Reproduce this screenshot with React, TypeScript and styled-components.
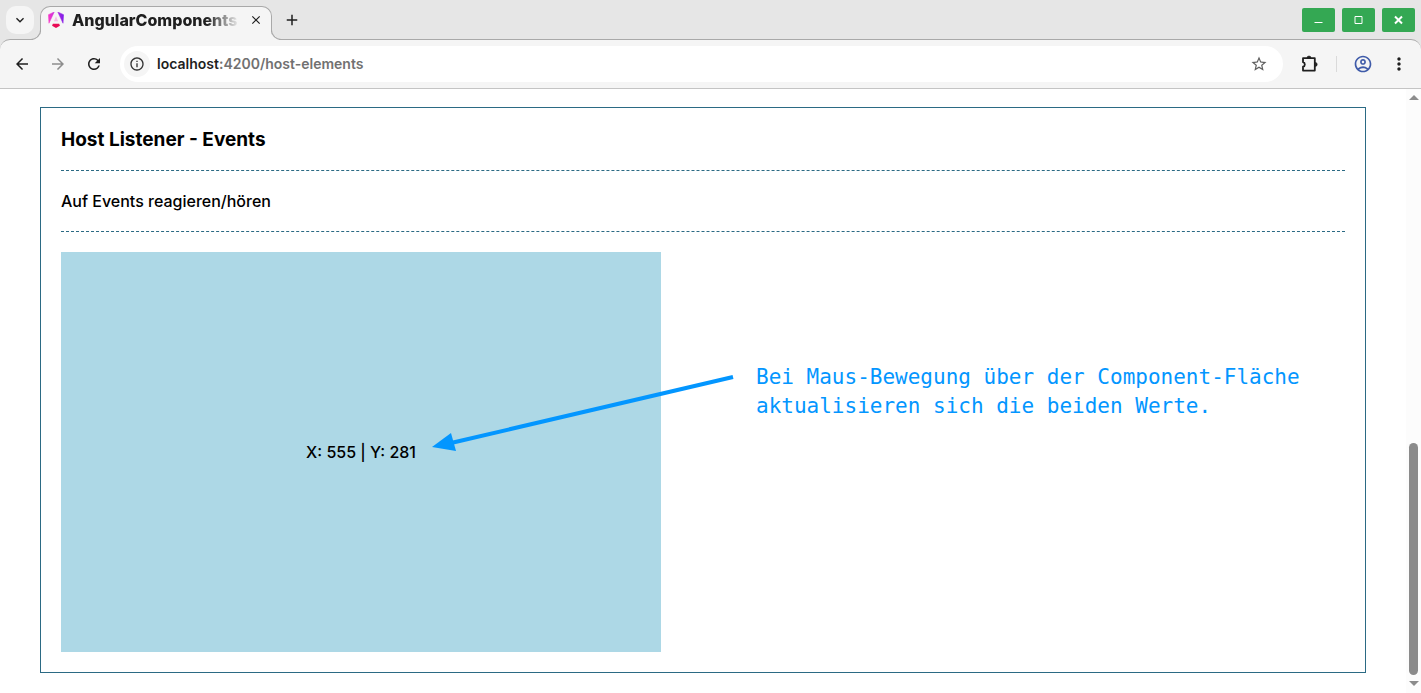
import React, { useState } from "react";
import styled, { createGlobalStyle } from "styled-components";
import {
  MdAdd,
  MdArrowBack,
  MdArrowForward,
  MdClose,
  MdInfoOutline,
  MdKeyboardArrowDown,
  MdMoreVert,
  MdOutlineAccountCircle,
  MdRefresh,
  MdStarBorder,
} from "react-icons/md";

const chrome = "#f5f5f5";
const outline = "#a9a9a9";
const blue = "#0396ff";

const GlobalStyle = createGlobalStyle`
  * { box-sizing: border-box; }
  body { margin: 0; background: #fff; color: #000; font-family: Inter, "Liberation Sans", sans-serif; }
  button { font: inherit; color: inherit; border: 0; padding: 0; background: none; }
`;

const Window = styled.div`
  display: flex;
  flex-direction: column;
  min-height: 100vh;
`;

const TabStrip = styled.header`
  display: flex;
  height: 40px;
  background: #e6e6e6;
  padding: 0 6px;
`;

const TabSearch = styled.button`
  display: grid;
  place-items: center;
  width: 28px;
  height: 28px;
  margin: 6px 6px 0 0;
  border-radius: 10px;
  background: ${chrome};
  color: #1f1f1f;
`;

const Tab = styled.div`
  position: relative;
  z-index: 1;
  display: flex;
  align-items: center;
  width: 232px;
  height: 34px;
  margin-top: 6px;
  padding: 0 6px 7px 7px;
  border: 1px solid ${outline};
  border-bottom: 0;
  border-radius: 10px 10px 0 0;
  background: ${chrome};

  &::before,
  &::after {
    content: "";
    position: absolute;
    bottom: 0;
    width: 10px;
    height: 10px;
    border: solid ${outline};
  }
  &::before {
    right: 100%;
    border-width: 0 1px 1px 0;
    border-radius: 0 0 10px 0;
    box-shadow: 3px 3px 0 ${chrome};
    clip-path: inset(0 -1px 0 0);
  }
  &::after {
    left: 100%;
    border-width: 0 0 1px 1px;
    border-radius: 0 0 0 10px;
    box-shadow: -3px 3px 0 ${chrome};
    clip-path: inset(0 0 0 -1px);
  }
`;

const TabTitle = styled.span`
  flex: 1;
  margin: 0 7px 0 8px;
  overflow: hidden;
  white-space: nowrap;
  font-size: 16px;
  line-height: 20px;
  font-weight: 800;
  color: #1f1f1f;
  mask-image: linear-gradient(to right, #000 80%, transparent);
`;

const StripButton = styled.button`
  display: grid;
  place-items: center;
  width: 18px;
  height: 18px;
  color: #1f1f1f;
`;

const NewTab = styled(StripButton)`
  margin: 11px 0 0 11px;
`;

const WindowControls = styled.div`
  display: flex;
  gap: 7px;
  margin: 8px 0 0 auto;
`;

const WindowButton = styled.button`
  display: grid;
  place-items: center;
  width: 33px;
  height: 24px;
  border-radius: 2px;
  background: #34a853;
`;

const Toolbar = styled.nav`
  display: flex;
  align-items: center;
  height: 50px;
  margin-top: -1px;
  padding: 0 12px;
  background: ${chrome};
  border: solid ${outline};
  border-width: 1px 0;
  border-bottom-color: #c4c4c4;
  border-radius: 10px 10px 0 0;
`;

const ToolbarBack = styled.div`
  background: linear-gradient(#e6e6e6 50%, ${chrome} 50%);
`;

const ToolButton = styled.button<{ $dim?: boolean; $accent?: boolean }>`
  display: grid;
  place-items: center;
  width: 20px;
  height: 20px;
  color: ${(p) => (p.$accent ? "#3f5ba9" : p.$dim ? "#8d8d8d" : "#1f1f1f")};
`;

const NavGroup = styled.div`
  display: flex;
  gap: 16px;
  margin-right: 16px;
`;

const AddressBar = styled.form`
  flex: 1;
  display: flex;
  align-items: center;
  height: 36px;
  padding: 0 14px 0 4px;
  border-radius: 18px;
  background: #fff;
`;

const SiteInfo = styled.button`
  display: grid;
  place-items: center;
  width: 26px;
  height: 26px;
  border-radius: 13px;
  background: ${chrome};
  color: #333;
`;

const Address = styled.a`
  flex: 1;
  margin-left: 7px;
  font-size: 14px;
  line-height: 20px;
  font-weight: 600;
  color: #717171;
  text-decoration: none;

  strong {
    font-weight: 600;
    color: #1f1f1f;
  }
`;

const Actions = styled.div`
  display: flex;
  align-items: center;
  gap: 16px;
  margin-left: 17px;
`;

const Divider = styled.span`
  width: 1px;
  height: 16px;
  background: #dadada;
`;

const Viewport = styled.div`
  flex: 1;
  display: flex;
`;

const Page = styled.main`
  flex: 1;
  min-width: 0;
  padding: 18px 40px 20px;
`;

const Card = styled.section`
  padding: 20px;
  border: 1px solid #2b6a84;
`;

const Heading = styled.h3`
  margin: 0;
  padding-bottom: 18px;
  border-bottom: 1px dashed #2b6a84;
  font-size: 19px;
  line-height: 24px;
  font-weight: 700;
`;

const Lead = styled.p`
  margin: 0;
  padding: 18px 0;
  border-bottom: 1px dashed #2b6a84;
  font-size: 16px;
  line-height: 24px;
  font-weight: 500;
`;

const Demo = styled.div`
  position: relative;
  display: flex;
  margin-top: 20px;
`;

const Surface = styled.div`
  display: grid;
  place-items: center;
  flex: 0 0 600px;
  height: 400px;
  background: #add8e6;
  font-size: 16px;
  line-height: 24px;
  font-weight: 500;
`;

const Note = styled.p`
  margin: 111px 0 0 95px;
  color: ${blue};
  font-family: "DejaVu Sans Mono", monospace;
  font-size: 21px;
  line-height: 29px;
`;

const Arrow = styled.svg`
  position: absolute;
  left: 370px;
  top: 120px;
`;

const ScrollRail = styled.div`
  display: flex;
  flex-direction: column;
  align-items: center;
  justify-content: space-between;
  width: 15px;
  padding: 6px 0 7px;
  background: #fcfcfc;
`;

const ScrollEnd = styled.div`
  display: flex;
  flex-direction: column;
  align-items: center;
  gap: 6px;
`;

const Thumb = styled.div`
  width: 9px;
  height: 232px;
  border-radius: 5px;
  background: #8b8b8b;
`;

function AngularLogo() {
  return (
    <svg width="16" height="16" viewBox="0 0 24 24" aria-hidden="true">
      <defs>
        <linearGradient id="ng" x1="0" y1="0.3" x2="1" y2="0.2">
          <stop offset="0" stopColor="#f637c8" />
          <stop offset="0.5" stopColor="#c02be0" />
          <stop offset="1" stopColor="#7a1be8" />
        </linearGradient>
      </defs>
      <path
        fill="url(#ng)"
        stroke="url(#ng)"
        strokeWidth="0.8"
        d="M14.692 0l7.832 16.855.814-12.856zM9.308 0L.662 3.999l.814 12.856z"
      />
      <path fill="#f637c8" opacity="0.3" d="M8.903 13.93h6.194L12 6.396z" />
      <path fill="#e90a55" d="M16.712 17.711H7.288l-1.204 2.916L12 24l5.916-3.373z" />
    </svg>
  );
}

function PuzzleIcon() {
  return (
    <svg width="20" height="20" viewBox="0 0 20 20" fill="none" aria-hidden="true">
      <path
        d="M3 4.200h11.800v12.400H3v-3.900a2.300 2.300 0 0 0 0-4.500z"
        stroke="currentColor"
        strokeWidth="1.8"
        strokeLinejoin="round"
      />
      <path d="M7 4a2 2 0 0 1 4 0zM15.200 8.400a2 2 0 0 1 0 4z" fill="currentColor" stroke="currentColor" strokeWidth="0.600" />
    </svg>
  );
}

function Triangle({ down }: { down?: boolean }) {
  return (
    <svg width="10" height="5" viewBox="0 0 10 5" aria-hidden="true">
      <path d={down ? "M0 0h10L5 5z" : "M0 5h10L5 0z"} fill="#8b8b8b" />
    </svg>
  );
}

export default function App() {
  const [point, setPoint] = useState({ x: 555, y: 281 });
  return (
    <>
      <GlobalStyle />
      <Window>
        <TabStrip>
          <TabSearch aria-label="Search tabs"><MdKeyboardArrowDown size={16} /></TabSearch>
          <Tab>
            <AngularLogo />
            <TabTitle>AngularComponents</TabTitle>
            <StripButton aria-label="Close tab"><MdClose size={14} /></StripButton>
          </Tab>
          <NewTab aria-label="New tab"><MdAdd size={18} /></NewTab>
          <WindowControls>
            <WindowButton aria-label="Minimize">
              <svg width="9" height="10" viewBox="0 0 9 10"><path d="M0.500 7.500h8" stroke="#fff" /></svg>
            </WindowButton>
            <WindowButton aria-label="Maximize">
              <svg width="9" height="10" viewBox="0 0 9 10"><path d="M1 1.500h7v7h-7z" fill="none" stroke="#fff" /></svg>
            </WindowButton>
            <WindowButton aria-label="Close">
              <svg width="9" height="10" viewBox="0 0 9 10"><path d="M1 1.500l7 7M8 1.500l-7 7" stroke="#fff" strokeWidth="2" /></svg>
            </WindowButton>
          </WindowControls>
        </TabStrip>
        <ToolbarBack>
          <Toolbar>
            <NavGroup>
              <ToolButton aria-label="Back"><MdArrowBack size={18} /></ToolButton>
              <ToolButton aria-label="Forward" $dim><MdArrowForward size={18} /></ToolButton>
              <ToolButton aria-label="Reload"><MdRefresh size={18} /></ToolButton>
            </NavGroup>
            <AddressBar>
              <SiteInfo type="button" aria-label="Site information"><MdInfoOutline size={16} /></SiteInfo>
              <Address href="#host-elements"><strong>localhost</strong>:4200/host-elements</Address>
              <ToolButton type="button" aria-label="Bookmark"><MdStarBorder size={18} color="#5f5f5f" /></ToolButton>
            </AddressBar>
            <Actions>
              <ToolButton aria-label="Extensions"><PuzzleIcon /></ToolButton>
              <Divider />
              <ToolButton aria-label="Profile" $accent><MdOutlineAccountCircle size={20} /></ToolButton>
              <ToolButton aria-label="Menu"><MdMoreVert size={20} /></ToolButton>
            </Actions>
          </Toolbar>
        </ToolbarBack>
        <Viewport>
          <Page>
            <Card>
              <Heading>Host Listener - Events</Heading>
              <Lead>Auf Events reagieren/hören</Lead>
              <Demo>
                <Surface
                  onMouseMove={(e) => setPoint({ x: e.clientX, y: e.clientY })}
                >
                  X: {point.x} | Y: {point.y}
                </Surface>
                <Note>
                  Bei Maus-Bewegung über der Component-Fläche
                  <br />
                  aktualisieren sich die beiden Werte.
                </Note>
                <Arrow width="304" height="84" viewBox="0 0 304 84" aria-hidden="true">
                  <path d="M302 5L20 71" stroke={blue} strokeWidth="4" />
                  <path d="M1 75L20 61L25 79z" fill={blue} />
                </Arrow>
              </Demo>
            </Card>
          </Page>
          <ScrollRail>
            <Triangle />
            <ScrollEnd>
              <Thumb />
              <Triangle down />
            </ScrollEnd>
          </ScrollRail>
        </Viewport>
      </Window>
    </>
  );
}
